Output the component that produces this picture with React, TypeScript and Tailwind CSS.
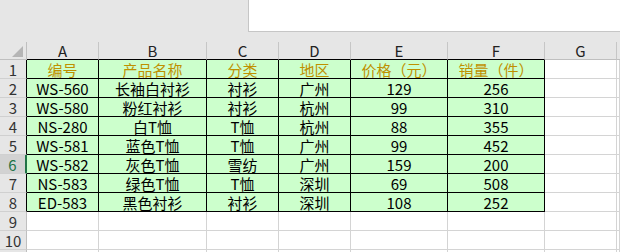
import React from "react";

const headers = ["编号", "产品名称", "分类", "地区", "价格（元）", "销量（件）"];
const rows: string[][] = [
  ["WS-560", "长袖白衬衫", "衬衫", "广州", "129", "256"],
  ["WS-580", "粉红衬衫", "衬衫", "杭州", "99", "310"],
  ["NS-280", "白T恤", "T恤", "杭州", "88", "355"],
  ["WS-581", "蓝色T恤", "T恤", "广州", "99", "452"],
  ["WS-582", "灰色T恤", "雪纺", "广州", "159", "200"],
  ["NS-583", "绿色T恤", "T恤", "深圳", "69", "508"],
  ["ED-583", "黑色衬衫", "衬衫", "深圳", "108", "252"],
];
const letters = ["A", "B", "C", "D", "E", "F", "G"];

function TableCell({ text, head }: { text: string; head?: boolean }) {
  return (
    <div
      className={
        "h-[19px] bg-[#ccffcc] border-r border-b border-black flex items-end justify-center leading-[17px] whitespace-nowrap " +
        (head ? "text-[#bf9000]" : "text-black")
      }
    >
      {text}
    </div>
  );
}

function EmptyCell() {
  return <div className="h-[19px] bg-white border-r border-b border-[#d4d4d4]" />;
}

function RowHead({ n, boxed, selected }: { n: string; boxed: boolean; selected?: boolean }) {
  return (
    <div
      className={
        "h-[19px] border-b border-[#d0d0d0] flex items-end justify-center leading-[17px] " +
        (selected
          ? "bg-[#d2d2d2] text-[#217346] border-r-2 border-r-[#217346]"
          : "bg-[#e6e6e6] text-[#333333] border-r " + (boxed ? "border-r-black" : "border-r-[#bfbfbf]"))
      }
    >
      {n}
    </div>
  );
}

export default function App() {
  return (
    <div className="w-[620px] h-[252px] overflow-hidden bg-[#e6e6e6] font-['Noto_Sans_CJK_SC',sans-serif] text-[15px]">
      <div className="flex h-[32px]">
        <div className="w-[248px] shrink-0" />
        <div className="flex-1 bg-white border-l border-b border-[#c6c6c6]" />
      </div>
      <div className="h-[10px]" />
      <div className="grid grid-cols-[27px_72px_108px_72px_72px_97px_97px_72px_1fr]">
        <div className="h-[18px] bg-[#e6e6e6] border-r border-b border-[#bfbfbf] relative">
          <svg className="absolute left-0 top-0" width="27" height="18" viewBox="0 0 27 18">
            <polygon points="12,15 23,15 23,4" fill="#b5b5b5" />
          </svg>
        </div>
        {letters.map((l, i) => (
          <div
            key={l}
            className={
              "h-[18px] bg-[#e6e6e6] border-r border-b border-r-[#c6c6c6] flex items-end justify-center leading-[17px] text-[#222222] " +
              (i < 6 ? "border-b-black" : "border-b-[#bfbfbf]")
            }
          >
            {l}
          </div>
        ))}
        <div className="h-[18px] bg-[#e6e6e6] border-b border-[#bfbfbf]" />

        <RowHead n="1" boxed />
        {headers.map((h) => (
          <TableCell key={h} text={h} head />
        ))}
        <EmptyCell />
        <EmptyCell />

        {rows.map((r, ri) => (
          <React.Fragment key={ri}>
            <RowHead n={String(ri + 2)} boxed selected={ri + 2 === 6} />
            {r.map((c, ci) => (
              <TableCell key={ci} text={c} />
            ))}
            <EmptyCell />
            <EmptyCell />
          </React.Fragment>
        ))}

        {["9", "10", ""].map((n, k) => (
          <React.Fragment key={"e" + k}>
            <RowHead n={n} boxed={false} />
            {Array.from({ length: 8 }).map((__, j) => (
              <EmptyCell key={j} />
            ))}
          </React.Fragment>
        ))}
      </div>
    </div>
  );
}
